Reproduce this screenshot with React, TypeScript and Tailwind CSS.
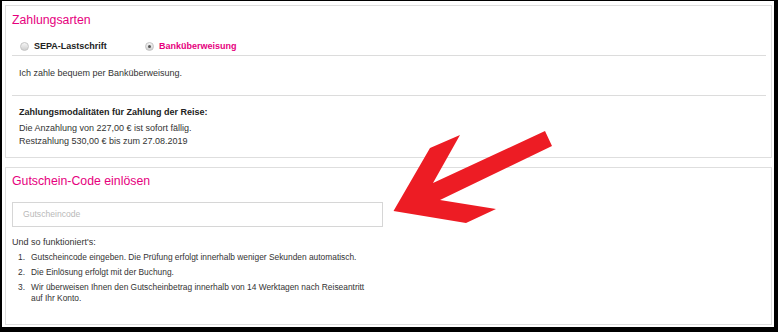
import React from "react";

const PINK = "text-[#e6007e]";

function Radio({ checked }: { checked?: boolean }) {
  return (
    <span className="w-[9px] h-[9px] rounded-full border border-[#c4c4c4] bg-linear-to-b from-[#f6f6f6] to-[#cfcfcf] flex items-center justify-center shrink-0">
      {checked ? <span className="w-[3px] h-[3px] rounded-full bg-[#555]" /> : null}
    </span>
  );
}

export default function App() {
  const steps = [
    "Gutscheincode eingeben. Die Prüfung erfolgt innerhalb weniger Sekunden automatisch.",
    "Die Einlösung erfolgt mit der Buchung.",
    "Wir überweisen Ihnen den Gutscheinbetrag innerhalb von 14 Werktagen nach Reiseantritt auf Ihr Konto.",
  ];
  return (
    <div className="relative w-[778px] h-[332px] bg-black pt-[1px] pl-[2px] pr-[4px] pb-[5px] font-['Liberation_Sans',Arial,sans-serif] text-[#333]">
      <div className="w-full h-full bg-white pt-[4px] pl-[3px] pr-[2px] flex flex-col gap-[9px]">
        {/* Card 1 */}
        <div className="h-[153px] border border-[#dedede] pl-[6px] pr-[5px] shrink-0">
          <div className={`pt-[7px] text-[12.3px] leading-[14px] ${PINK}`}>Zahlungsarten</div>
          <div className="pt-[13px] pb-[3px] border-b border-[#dcdcdc] flex items-center pl-[8px] text-[9px] leading-[12px] font-bold">
            <div className="w-[125px] flex items-center gap-[5px]">
              <Radio />
              <span className="text-[#222]">SEPA-Lastschrift</span>
            </div>
            <div className="flex items-center gap-[5px]">
              <Radio checked />
              <span className={PINK}>Banküberweisung</span>
            </div>
          </div>
          <div className="pt-[11px] pb-[16px] border-b border-[#dcdcdc] pl-[7px] text-[9px] leading-[12px]">
            Ich zahle bequem per Banküberweisung.
          </div>
          <div className="pt-[10px] pl-[7px] text-[9px]">
            <div className="leading-[12px] font-bold text-[#222]">Zahlungsmodalitäten für Zahlung der Reise:</div>
            <div className="mt-[4px] leading-[13px]">Die Anzahlung von 227,00 € ist sofort fällig.</div>
            <div className="leading-[13px]">Restzahlung 530,00 € bis zum 27.08.2019</div>
          </div>
        </div>
        {/* Card 2 */}
        <div className="h-[158px] border border-[#dedede] pl-[6px] pr-[5px] shrink-0">
          <div className={`pt-[6px] text-[12.3px] leading-[14px] ${PINK}`}>Gutschein-Code einlösen</div>
          <div className="mt-[14px] w-[371px] h-[25px] border border-[#d6d6d6] flex items-center pl-[10px] text-[8.6px] text-[#b9b9b9]">
            Gutscheincode
          </div>
          <div className="mt-[9px] text-[9px] leading-[12px]">Und so funktioniert's:</div>
          <ol className="mt-[4px] text-[8.4px] leading-[11px]">
            {steps.map((s, i) => (
              <li key={i} className="flex mb-[4px]">
                <span className="ml-[6px] w-[13px] shrink-0">{i + 1}.</span>
                <span className="w-[345px]">{s}</span>
              </li>
            ))}
          </ol>
        </div>
      </div>
      <svg
        className="absolute left-0 top-0 pointer-events-none"
        width="778"
        height="332"
        viewBox="0 0 778 332"
      >
        <polygon
          points="393.5,211 430,148 460,135 433,183 545,131 552,146 440,200 496,209 466,223"
          fill="#ed1c24"
        />
      </svg>
    </div>
  );
}
